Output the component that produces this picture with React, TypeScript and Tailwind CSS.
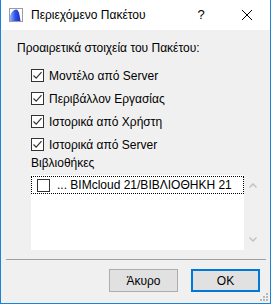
import React from "react";

const font = { fontFamily: '"Liberation Sans", Arial, sans-serif' };

function Check({ checked }: { checked: boolean }) {
  return (
    <div className="w-[13px] h-[13px] border border-[#333333] bg-white flex items-center justify-center shrink-0">
      {checked && (
        <svg width="11" height="11" viewBox="0 0 11 11">
          <path d="M1.5 5.5 L4.2 8.2 L9.5 2.2" fill="none" stroke="#333333" strokeWidth="1.2" />
        </svg>
      )}
    </div>
  );
}

function Row({ label }: { label: string }) {
  return (
    <div className="h-[23px] flex items-center pl-[30px]">
      <Check checked />
      <span className="ml-[5px] text-[12px] leading-[14px] text-black">{label}</span>
    </div>
  );
}

function AppIcon() {
  return (
    <svg width="14" height="14" viewBox="0 0 14 14">
      <defs>
        <linearGradient id="g" x1="0" y1="0" x2="1" y2="0">
          <stop offset="0" stopColor="#8fb4ff" />
          <stop offset="0.5" stopColor="#2f52e8" />
          <stop offset="1" stopColor="#1a2bc0" />
        </linearGradient>
      </defs>
      <rect x="0.5" y="0.5" width="13" height="13" fill="#ffffff" stroke="#9a9aa8" />
      <path d="M1 13 L1 8 Q3 2 7 1.5 Q9.5 1.5 10.5 7 L11.5 13 Z" fill="url(#g)" />
    </svg>
  );
}

export default function App() {
  return (
    <div
      className="w-[271px] h-[304px] flex flex-col bg-[#f0f0f0] border-l border-r border-b border-[#1883d7] relative"
      style={font}
    >
      <div className="h-[30px] bg-white flex items-center shrink-0">
        <div className="ml-[8px]">
          <AppIcon />
        </div>
        <span className="ml-[8px] text-[12px] text-black">Περιεχόμενο Πακέτου</span>
        <div className="ml-auto flex h-full">
          <div className="w-[46px] h-full flex items-center justify-center text-[13px] text-black">?</div>
          <div className="w-[46px] h-full flex items-center justify-center">
            <svg width="10" height="10" viewBox="0 0 10 10">
              <path d="M0 0 L10 10 M10 0 L0 10" stroke="#000" strokeWidth="1" />
            </svg>
          </div>
        </div>
      </div>

      <div className="flex-1 flex flex-col">
        <div className="pl-[16px] pt-[10px] h-[34px] text-[12px] leading-[16px] text-black">
          Προαιρετικά στοιχεία του Πακέτου:
        </div>
        <Row label="Μοντέλο από Server" />
        <Row label="Περιβάλλον Εργασίας" />
        <Row label="Ιστορικά από Χρήστη" />
        <Row label="Ιστορικά από Server" />
        <div className="pl-[30px] h-[19px] text-[12px] leading-[14px] text-black">Βιβλιοθήκες</div>
        <div className="flex ml-[30px] h-[75px]">
          <div className="w-[213px] h-full bg-white">
            <div className="h-[18px] mt-[1px] border border-dotted border-black flex items-center pl-[5px]">
              <div className="w-[13px] h-[13px] border border-[#333333] bg-white shrink-0" />
              <span className="ml-[7px] text-[12px] text-black">... BIMcloud 21/ΒΙΒΛΙΟΘΗΚΗ 21</span>
            </div>
          </div>
          <div className="w-[17px] h-full flex flex-col items-center justify-between py-[8px]">
            <svg width="8" height="5" viewBox="0 0 8 5">
              <path d="M0.5 4.5 L4 1 L7.5 4.5" fill="none" stroke="#c2c2c2" strokeWidth="1.5" />
            </svg>
            <svg width="8" height="5" viewBox="0 0 8 5">
              <path d="M0.5 0.5 L4 4 L7.5 0.5" fill="none" stroke="#c2c2c2" strokeWidth="1.5" />
            </svg>
          </div>
        </div>
        <div className="mt-[9px] ml-[5px] w-[260px] h-[1px] bg-[#a0a0a0]" />
        <div className="flex justify-end mt-[9px] pr-[10px] gap-[13px]">
          <div className="w-[69px] h-[23px] border border-[#adadad] bg-[#e1e1e1] flex items-center justify-center text-[12px] text-black">
            Άκυρο
          </div>
          <div className="w-[69px] h-[23px] border-2 border-[#0078d7] bg-[#e1e1e1] flex items-center justify-center text-[12px] text-black">
            OK
          </div>
        </div>
      </div>

      <svg className="absolute right-[2px] bottom-[2px]" width="8" height="8" viewBox="0 0 8 8">
        <rect x="6" y="0" width="2" height="2" fill="#b8b8b8" />
        <rect x="3" y="3" width="2" height="2" fill="#b8b8b8" />
        <rect x="6" y="3" width="2" height="2" fill="#b8b8b8" />
        <rect x="0" y="6" width="2" height="2" fill="#b8b8b8" />
        <rect x="3" y="6" width="2" height="2" fill="#b8b8b8" />
        <rect x="6" y="6" width="2" height="2" fill="#b8b8b8" />
      </svg>
    </div>
  );
}
